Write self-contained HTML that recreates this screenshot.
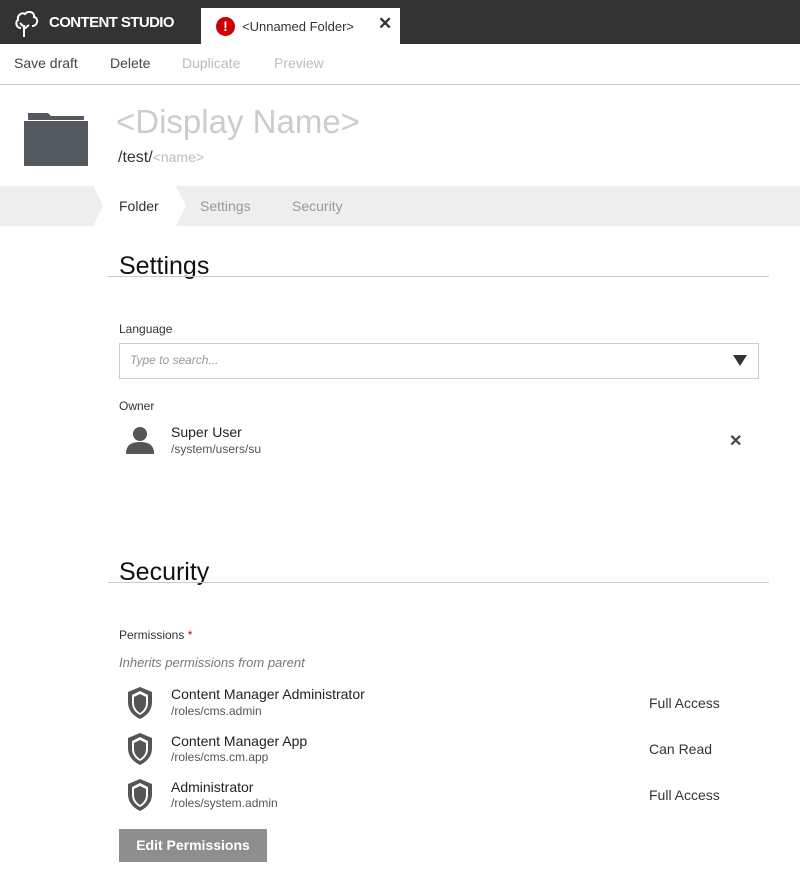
<!DOCTYPE html><html><head><style>
body{margin:0;width:800px;height:896px;background:#fff;font-family:"Liberation Sans",sans-serif;position:relative;overflow:hidden;color:#333}
.a{position:absolute;white-space:nowrap}
</style></head><body>
<div class="a" style="left:0;top:0;width:800px;height:44px;background:#333"></div>
<svg class="a" style="left:14px;top:9px" width="28" height="30" viewBox="0 0 28 30"><g fill="none" stroke="#fff" stroke-width="2"><path d="M10 28V16M10 18l-4-4M10 20l5-4"/><path d="M7 19C2 19 1 13 4 11 3 6 8 3 11 5 14 1 21 3 20 8 25 9 24 17 18 17"/></g></svg>
<div class="a" style="left:49px;top:14px;color:#fff;font-size:15px;font-weight:bold;letter-spacing:-.6px">CONTENT STUDIO</div>
<div class="a" style="left:201px;top:8px;width:199px;height:36px;background:#fff"></div>
<div class="a" style="left:216px;top:17px;width:19px;height:19px;border-radius:50%;background:#c00;color:#fff;font-size:14px;font-weight:bold;text-align:center;line-height:19px">!</div>
<div class="a" style="left:242px;top:19px;font-size:13px;color:#333">&lt;Unnamed Folder&gt;</div>
<div class="a" style="left:378px;top:14px;font-size:17px;font-weight:bold;color:#333">✕</div>
<div class="a" style="left:14px;top:55px;font-size:14px;color:#444">Save draft</div>
<div class="a" style="left:110px;top:55px;font-size:14px;color:#444">Delete</div>
<div class="a" style="left:182px;top:55px;font-size:14px;color:#bbb">Duplicate</div>
<div class="a" style="left:274px;top:55px;font-size:14px;color:#bbb">Preview</div>
<div class="a" style="left:0;top:84px;width:800px;height:1px;background:#ccc"></div>
<svg class="a" style="left:24px;top:113px" width="65" height="53"><path d="M4 0h20l3 3h33v4H4z" fill="#555a60"/><path d="M0 8h64v45H0z" fill="#555a60"/></svg>
<div class="a" style="left:116px;top:103px;font-size:33px;color:#ccc">&lt;Display Name&gt;</div>
<div class="a" style="left:118px;top:149px;font-size:16px;color:#333">/test/<span style="color:#bbb;font-size:14px">&lt;name&gt;</span></div>
<div class="a" style="left:0;top:186px;width:800px;height:40px;background:#eee"></div>
<svg class="a" style="left:93px;top:186px" width="95" height="40"><path d="M0 0h83l10 20-10 20H0l10-20z" fill="#fff"/></svg>
<div class="a" style="left:119px;top:198px;font-size:14px;color:#333">Folder</div>
<div class="a" style="left:200px;top:198px;font-size:14px;color:#999">Settings</div>
<div class="a" style="left:292px;top:198px;font-size:14px;color:#999">Security</div>
<div class="a" style="left:119px;top:252px;font-size:25px;color:#111">Settings</div>
<div class="a" style="left:108px;top:276px;width:661px;height:1px;background:#ccc"></div>
<div class="a" style="left:119px;top:322px;font-size:12px;color:#333">Language</div>
<div class="a" style="left:119px;top:343px;width:638px;height:34px;border:1px solid #ccc"></div>
<div class="a" style="left:130px;top:353px;font-size:12px;font-style:italic;color:#999">Type to search...</div>
<svg class="a" style="left:733px;top:355px" width="14" height="11"><path d="M0 0h14L7 11z" fill="#333"/></svg>
<div class="a" style="left:119px;top:399px;font-size:12px;color:#333">Owner</div>
<svg class="a" style="left:125px;top:425px" width="30" height="30"><circle cx="15" cy="9" r="7" fill="#555"/><path d="M1 29c0-9 5-12 14-12s14 3 14 12z" fill="#555"/></svg>
<div class="a" style="left:171px;top:424px;font-size:14px;color:#222">Super User</div>
<div class="a" style="left:171px;top:442px;font-size:12px;color:#555">/system/users/su</div>
<div class="a" style="left:729px;top:431px;font-size:16px;font-weight:bold;color:#444">✕</div>
<div class="a" style="left:119px;top:558px;font-size:25px;color:#111">Security</div>
<div class="a" style="left:108px;top:582px;width:661px;height:1px;background:#ccc"></div>
<div class="a" style="left:119px;top:628px;font-size:12px;color:#333">Permissions <span style="color:#c00">*</span></div>
<div class="a" style="left:119px;top:655px;font-size:13px;font-style:italic;color:#777">Inherits permissions from parent</div>
<svg class="a" style="left:126px;top:686px" width="28" height="34"><path d="M14 1L26 6v10c0 9-6 14-12 17C8 30 2 25 2 16V6z" fill="#555"/><path d="M14 5L22 9v8c0 6-4 10-8 12-4-2-8-6-8-12V9z" fill="#fff"/><path d="M14 8l6 3v6c0 5-3 8-6 10-3-2-6-5-6-10v-6z" fill="#555"/></svg>
<svg class="a" style="left:126px;top:732px" width="28" height="34"><path d="M14 1L26 6v10c0 9-6 14-12 17C8 30 2 25 2 16V6z" fill="#555"/><path d="M14 5L22 9v8c0 6-4 10-8 12-4-2-8-6-8-12V9z" fill="#fff"/><path d="M14 8l6 3v6c0 5-3 8-6 10-3-2-6-5-6-10v-6z" fill="#555"/></svg>
<svg class="a" style="left:126px;top:778px" width="28" height="34"><path d="M14 1L26 6v10c0 9-6 14-12 17C8 30 2 25 2 16V6z" fill="#555"/><path d="M14 5L22 9v8c0 6-4 10-8 12-4-2-8-6-8-12V9z" fill="#fff"/><path d="M14 8l6 3v6c0 5-3 8-6 10-3-2-6-5-6-10v-6z" fill="#555"/></svg>
<div class="a" style="left:171px;top:686px;font-size:14px;color:#222">Content Manager Administrator</div>
<div class="a" style="left:171px;top:704px;font-size:12px;color:#555">/roles/cms.admin</div>
<div class="a" style="left:649px;top:695px;font-size:14px;color:#333">Full Access</div>
<div class="a" style="left:171px;top:733px;font-size:14px;color:#222">Content Manager App</div>
<div class="a" style="left:171px;top:750px;font-size:12px;color:#555">/roles/cms.cm.app</div>
<div class="a" style="left:649px;top:741px;font-size:14px;color:#333">Can Read</div>
<div class="a" style="left:171px;top:779px;font-size:14px;color:#222">Administrator</div>
<div class="a" style="left:171px;top:796px;font-size:12px;color:#555">/roles/system.admin</div>
<div class="a" style="left:649px;top:787px;font-size:14px;color:#333">Full Access</div>
<div class="a" style="left:119px;top:829px;width:148px;height:33px;background:#8e8e8e;color:#fff;font-size:14px;font-weight:bold;text-align:center;line-height:33px">Edit Permissions</div>
</body></html>
